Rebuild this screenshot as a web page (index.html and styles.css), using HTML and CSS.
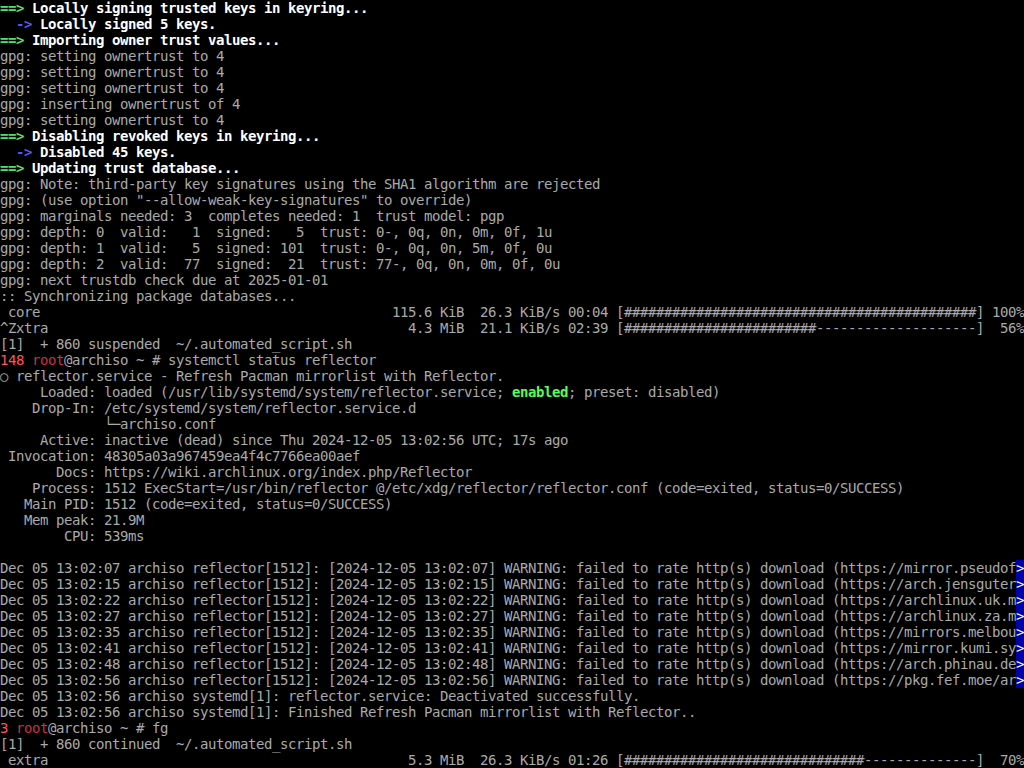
FILE: index.html
```html
<!DOCTYPE html>
<html lang="en">
<head>
<meta charset="utf-8">
<title>tty1</title>
<link rel="stylesheet" href="styles.css">
</head>
<body>
<div class="term">
<div class="ln"><span class="g">==&gt;</span> <span class="w">Locally signing trusted keys in keyring...</span></div>
<div class="ln">  <span class="b">-&gt;</span> <span class="w">Locally signed 5 keys.</span></div>
<div class="ln"><span class="g">==&gt;</span> <span class="w">Importing owner trust values...</span></div>
<div class="ln">gpg: setting ownertrust to 4</div>
<div class="ln">gpg: setting ownertrust to 4</div>
<div class="ln">gpg: setting ownertrust to 4</div>
<div class="ln">gpg: inserting ownertrust of 4</div>
<div class="ln">gpg: setting ownertrust to 4</div>
<div class="ln"><span class="g">==&gt;</span> <span class="w">Disabling revoked keys in keyring...</span></div>
<div class="ln">  <span class="b">-&gt;</span> <span class="w">Disabled 45 keys.</span></div>
<div class="ln"><span class="g">==&gt;</span> <span class="w">Updating trust database...</span></div>
<div class="ln">gpg: Note: third-party key signatures using the SHA1 algorithm are rejected</div>
<div class="ln">gpg: (use option "--allow-weak-key-signatures" to override)</div>
<div class="ln">gpg: marginals needed: 3  completes needed: 1  trust model: pgp</div>
<div class="ln">gpg: depth: 0  valid:   1  signed:   5  trust: 0-, 0q, 0n, 0m, 0f, 1u</div>
<div class="ln">gpg: depth: 1  valid:   5  signed: 101  trust: 0-, 0q, 0n, 5m, 0f, 0u</div>
<div class="ln">gpg: depth: 2  valid:  77  signed:  21  trust: 77-, 0q, 0n, 0m, 0f, 0u</div>
<div class="ln">gpg: next trustdb check due at 2025-01-01</div>
<div class="ln">:: Synchronizing package databases...</div>
<div class="ln"> core                                            115.6 KiB  26.3 KiB/s 00:04 [############################################] 100%</div>
<div class="ln">^Zxtra                                             4.3 MiB  21.1 KiB/s 02:39 [########################--------------------]  56%</div>
<div class="ln">[1]  + 860 suspended  ~/.automated_script.sh</div>
<div class="ln"><span class="r">148</span> <span class="rd">root</span><span>@archiso ~ # systemctl status reflector</span></div>
<div class="ln">○ reflector.service - Refresh Pacman mirrorlist with Reflector.</div>
<div class="ln"><span>     Loaded: loaded (/usr/lib/systemd/system/reflector.service; </span><span class="e">enabled</span><span>; preset: disabled)</span></div>
<div class="ln">    Drop-In: /etc/systemd/system/reflector.service.d</div>
<div class="ln">             └─archiso.conf</div>
<div class="ln">     Active: inactive (dead) since Thu 2024-12-05 13:02:56 UTC; 17s ago</div>
<div class="ln"> Invocation: 48305a03a967459ea4f4c7766ea00aef</div>
<div class="ln">       Docs: https://wiki.archlinux.org/index.php/Reflector</div>
<div class="ln">    Process: 1512 ExecStart=/usr/bin/reflector @/etc/xdg/reflector/reflector.conf (code=exited, status=0/SUCCESS)</div>
<div class="ln">   Main PID: 1512 (code=exited, status=0/SUCCESS)</div>
<div class="ln">   Mem peak: 21.9M</div>
<div class="ln">        CPU: 539ms</div>
<div class="ln"></div>
<div class="ln"><span>Dec 05 13:02:07 archiso reflector[1512]: [2024-12-05 13:02:07] WARNING: failed to rate http(s) download (https://mirror.pseudof</span><span class="m">&gt;</span></div>
<div class="ln"><span>Dec 05 13:02:15 archiso reflector[1512]: [2024-12-05 13:02:15] WARNING: failed to rate http(s) download (https://arch.jensguter</span><span class="m">&gt;</span></div>
<div class="ln"><span>Dec 05 13:02:22 archiso reflector[1512]: [2024-12-05 13:02:22] WARNING: failed to rate http(s) download (https://archlinux.uk.m</span><span class="m">&gt;</span></div>
<div class="ln"><span>Dec 05 13:02:27 archiso reflector[1512]: [2024-12-05 13:02:27] WARNING: failed to rate http(s) download (https://archlinux.za.m</span><span class="m">&gt;</span></div>
<div class="ln"><span>Dec 05 13:02:35 archiso reflector[1512]: [2024-12-05 13:02:35] WARNING: failed to rate http(s) download (https://mirrors.melbou</span><span class="m">&gt;</span></div>
<div class="ln"><span>Dec 05 13:02:41 archiso reflector[1512]: [2024-12-05 13:02:41] WARNING: failed to rate http(s) download (https://mirror.kumi.sy</span><span class="m">&gt;</span></div>
<div class="ln"><span>Dec 05 13:02:48 archiso reflector[1512]: [2024-12-05 13:02:48] WARNING: failed to rate http(s) download (https://arch.phinau.de</span><span class="m">&gt;</span></div>
<div class="ln"><span>Dec 05 13:02:56 archiso reflector[1512]: [2024-12-05 13:02:56] WARNING: failed to rate http(s) download (https://pkg.fef.moe/ar</span><span class="m">&gt;</span></div>
<div class="ln">Dec 05 13:02:56 archiso systemd[1]: reflector.service: Deactivated successfully.</div>
<div class="ln">Dec 05 13:02:56 archiso systemd[1]: Finished Refresh Pacman mirrorlist with Reflector..</div>
<div class="ln"><span class="r">3</span> <span class="rd">root</span><span>@archiso ~ # fg</span></div>
<div class="ln">[1]  + 860 continued  ~/.automated_script.sh</div>
<div class="ln"> extra                                             5.3 MiB  26.3 KiB/s 01:26 [##############################--------------]  70%</div>
</div>
</body>
</html>
```

FILE: styles.css
```css
html,
body {
  margin: 0;
  padding: 0;
  background: #000;
}

.term {
  width: 1024px;
  height: 768px;
  overflow: hidden;
  font-family: "DejaVu Sans Mono", "Liberation Mono", monospace;
  font-size: 14px;
  letter-spacing: -0.4287px;
  line-height: 16px;
  color: #aaaaaa;
}

.ln {
  height: 16px;
  white-space: pre;
}

.g {
  color: #55e055;
  font-weight: bold;
}

.b {
  color: #5555ff;
  font-weight: bold;
}

.w {
  color: #ffffff;
  font-weight: bold;
}

.r {
  color: #ff5555;
}

.rd {
  color: #c83246;
}

.e {
  color: #55ff55;
  font-weight: bold;
}

.m {
  color: #ffffff;
  background: #0000aa;
}
```
